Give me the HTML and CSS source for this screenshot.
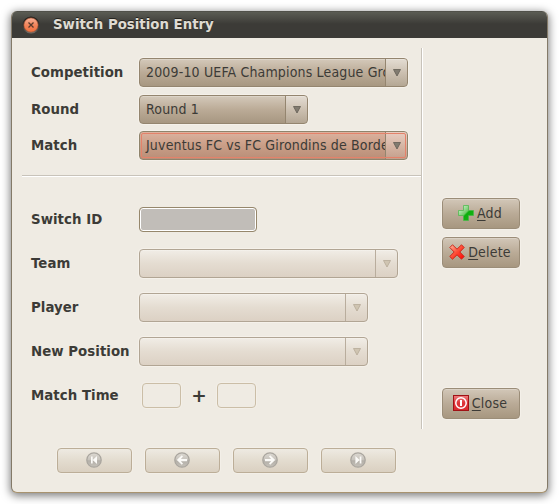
FILE: index.html
```
<!DOCTYPE html>
<html lang="en">
<head>
<meta charset="utf-8">
<title>Switch Position Entry</title>
<link rel="stylesheet" href="styles.css">
</head>
<body>
<main class="window">
  <header class="titlebar">
    <svg class="close" width="18" height="18" viewBox="0 0 18 18">
      <defs><linearGradient id="orb" x1="0" y1="0" x2="0" y2="1"><stop offset="0" stop-color="#f8b39a"/><stop offset=".5" stop-color="#f3855c"/><stop offset="1" stop-color="#f2703c"/></linearGradient>
      <linearGradient id="rim" x1="0" y1="0" x2="0" y2="1"><stop offset="0" stop-color="#1f1e1b"/><stop offset=".6" stop-color="#3a3733"/><stop offset="1" stop-color="#77736c"/></linearGradient></defs>
      <circle cx="9" cy="9" r="8.600" fill="url(#rim)"/>
      <circle cx="9" cy="9" r="7.100" fill="url(#orb)" stroke="#b85a35" stroke-width=".6"/>
      <path d="M6.500 6.500l5 5M11.500 6.500l-5 5" stroke="#5a3a2c" stroke-width="1.300"/>
    </svg>
    <h1>Switch Position Entry</h1>
  </header>
  <div class="body">
    <div class="upper">
      <div class="left">
        <section class="filters">
          <div class="row"><label>Competition</label><div class="combo w269"><span class="value">2009-10 UEFA Champions League Gro</span><span class="drop"><svg width="9" height="8"><path d="M.5 .5h7l-3.500 6.500z"/></svg></span></div></div>
          <div class="row"><label>Round</label><div class="combo w169"><span class="value">Round 1</span><span class="drop"><svg width="9" height="8"><path d="M.5 .5h7l-3.500 6.500z"/></svg></span></div></div>
          <div class="row match"><label>Match</label><div class="combo w269 focus"><span class="value">Juventus FC vs FC Girondins de Borde</span><span class="drop"><svg width="9" height="8"><path d="M.5 .5h7l-3.500 6.500z"/></svg></span></div></div>
        </section>
        <section class="details">
          <div class="row"><label>Switch ID</label><div class="entry id"></div></div>
          <div class="row"><label>Team</label><div class="combo w259 off"><span class="value"></span><span class="drop"><svg width="9" height="8"><path d="M.5 .5h7l-3.500 6.500z"/></svg></span></div></div>
          <div class="row"><label>Player</label><div class="combo w229 off"><span class="value"></span><span class="drop"><svg width="9" height="8"><path d="M.5 .5h7l-3.500 6.500z"/></svg></span></div></div>
          <div class="row"><label>New Position</label><div class="combo w229 off"><span class="value"></span><span class="drop"><svg width="9" height="8"><path d="M.5 .5h7l-3.500 6.500z"/></svg></span></div></div>
          <div class="row"><label>Match Time</label><div class="time"><div class="entry small"></div><span class="plus">+</span><div class="entry small"></div></div></div>
        </section>
      </div>
      <aside class="actions">
        <button class="btn add"><svg width="16" height="16" viewBox="0 0 16 16"><defs><linearGradient id="g" x1="0" y1="0" x2="1" y2="1"><stop offset=".15" stop-color="#c3ecc0"/><stop offset=".48" stop-color="#6ecb68"/><stop offset=".55" stop-color="#0cae0c"/><stop offset="1" stop-color="#19b519"/></linearGradient></defs><path d="M5.500.5h5v5h5v5h-5v5h-5v-5h-5v-5h5z" fill="url(#g)" stroke="#45b845" stroke-width=".7"/></svg><span><u>A</u>dd</span></button>
        <button class="btn delete"><svg width="16" height="16" viewBox="0 0 16 16"><defs><linearGradient id="r" x1="0" y1="0" x2="1" y2="1"><stop offset="0" stop-color="#ffb7a0"/><stop offset=".5" stop-color="#ff4b35"/><stop offset="1" stop-color="#f00"/></linearGradient></defs><path d="M3.500.8L8 5.200 12.500.8 15.200 3.500 10.800 8l4.400 4.500-2.700 2.700L8 10.800l-4.500 4.400L.8 12.500 5.200 8 .8 3.500z" fill="url(#r)" stroke="#c82a1c"/></svg><span><u>D</u>elete</span></button>
        <button class="btn quit"><svg width="16" height="16" viewBox="0 0 16 16"><defs><linearGradient id="q" x1="0" y1="0" x2="0" y2="1"><stop offset="0" stop-color="#ee7f7f"/><stop offset=".5" stop-color="#dd3438"/><stop offset="1" stop-color="#d92a2e"/></linearGradient></defs><rect x=".5" y=".5" width="15" height="15" fill="url(#q)" stroke="#a01216"/><circle cx="8" cy="8" r="5.200" fill="none" stroke="#fff" stroke-width="1.500"/><path d="M8 5v6" stroke="#fff" stroke-width="2"/></svg><span><u>C</u>lose</span></button>
      </aside>
    </div>
    <nav class="nav">
      <button><svg width="16" height="16" viewBox="0 0 16 16"><circle cx="8" cy="8" r="7.200"/><path d="M5 4.500h1.700v7H5zM11 4v8L6.700 8z"/></svg></button>
      <button><svg width="16" height="16" viewBox="0 0 16 16"><circle cx="8" cy="8" r="7.200"/><path d="M2.800 8l5-4.800 1.200 1.300L6.900 6.900H13v2.300H6.900L9 11.500l-1.200 1.300z"/></svg></button>
      <button><svg width="16" height="16" viewBox="0 0 16 16"><circle cx="8" cy="8" r="7.200"/><path d="M13.200 8l-5-4.800L7 4.500l2.100 2.400H3v2.300h6.100L7 11.500l1.200 1.300z"/></svg></button>
      <button><svg width="16" height="16" viewBox="0 0 16 16"><circle cx="8" cy="8" r="7.200"/><path d="M9.700 4.500h1.700v7H9.700zM5.400 4v8L9.700 8z"/></svg></button>
    </nav>
  </div>
</main>
<svg width="0" height="0" class="defs"><defs><linearGradient id="gray" x1="0" y1="0" x2="0" y2="1"><stop offset="0" stop-color="#ddd9d2"/><stop offset=".5" stop-color="#c6c2bb"/><stop offset=".55" stop-color="#b3afa8"/><stop offset="1" stop-color="#c6c2ba"/></linearGradient></defs></svg>
</body>
</html>
```
FILE: styles.css
```
* { box-sizing: border-box; }
body { margin: 0; height: 504px; padding: 11px 0 0 11px; background: #fff; overflow: hidden; font-family: "DejaVu Sans Condensed", "DejaVu Sans", sans-serif; font-stretch: condensed; color: #3c3b37; }
svg { display: block; flex: none; }
.defs { position: absolute; }
.window { width: 537px; height: 482px; border: 1px solid #847a68; border-top: 0; border-bottom-color: #a8936f; border-radius: 6px; background: #efebe3; box-shadow: 0 2px 8px 1px rgba(0,0,0,.5); overflow: hidden; }
.titlebar { display: flex; align-items: center; height: 27px; padding-left: 10px; background: linear-gradient(#46453f 0, #5b5c54 1px, #3c3b37 13px, #3c3b37); }
.close { margin-top: 1px; }
.titlebar h1 { margin: 0 0 0 13px; font: bold 13.33px/27px "DejaVu Sans", sans-serif; color: #dfdbd2; text-shadow: 0 -1px #25241f; }
.body { padding: 10px 0 0 10px; }
.upper { display: flex; height: 381px; }
.left { width: 400px; border-right: 1px solid #c8c3ba; box-shadow: 1px 0 #fff; }
.filters { height: 128px; padding: 10px 0 0 9px; display: flex; flex-direction: column; border-bottom: 1px solid #c8c3ba; box-shadow: 0 1px #fff; }
.details { padding: 31px 0 0 9px; }
.row { display: flex; align-items: center; height: 29px; }
.filters .row { margin-bottom: 8px; }
.filters .match { margin-top: -1px; }
.details .row { height: 25px; margin-bottom: 19px; }
label { width: 108px; flex: none; font: bold 13.33px/20px "DejaVu Sans", sans-serif; letter-spacing: .04px; white-space: nowrap; }
.combo { display: flex; flex: none; height: 29px; border: 1px solid #94856f; border-radius: 4px; background: linear-gradient(#d4c9ba, #bbab97 50%, #a79781); box-shadow: 0 0 0 1px #f5f1ea, inset 0 1px rgba(255,255,255,.22); overflow: hidden; }
.w269 { width: 269px; }
.w169 { width: 169px; }
.w259 { width: 259px; }
.w229 { width: 229px; }
.value { flex: 1; min-width: 0; padding-left: 6px; font-size: 14px; line-height: 27px; letter-spacing: .16px; white-space: nowrap; overflow: hidden; }
.drop { width: 22px; flex: none; padding: 10px 0 0 7px; border-left: 1px solid #94856f; background: linear-gradient(rgba(255,255,255,.35), rgba(255,255,255,.15)); }
.drop path { fill: #817b70; stroke: #625d54; stroke-width: .8; }
.focus { border-color: #8f846c; background: linear-gradient(#dcb29f, #c99e87 50%, #b98e78); box-shadow: 0 0 0 1px #f5f1ea; position: relative; }
.focus::after { content: ""; position: absolute; inset: 1px; border: 1px solid #e4826a; border-radius: 2px; }
.off { border-color: #b1a594; background: linear-gradient(#f1ede6, #e4dcd1 50%, #dcd1c4); }
.off .drop { border-color: #b9ad9d; background: none; }
.off .drop path { fill: #cfc4b1; stroke: #b5aa97; }
.entry { height: 25px; border: 1px solid #cbbea7; border-radius: 4px; box-shadow: 0 0 0 1px #f3efe8; }
.id { width: 118px; border-color: #96876c; background: #c1bdb8; box-shadow: inset 0 0 0 1px #fff; }
.time { display: flex; align-items: center; padding-left: 3px; }
.small { width: 39px; }
.plus { width: 36px; text-align: center; font: bold 18.5px/25px "DejaVu Sans", sans-serif; }
.actions { padding: 150px 0 0 20px; }
button { display: flex; align-items: center; justify-content: center; margin: 0; padding: 0; border-radius: 4px; font: 14px/20px "DejaVu Sans Condensed", "DejaVu Sans", sans-serif; font-stretch: condensed; color: #3c3b37; }
.btn { width: 78px; height: 31px; margin-bottom: 8px; padding: 0 2px 2px 0; gap: 3px; letter-spacing: .2px; border: 1px solid #9b8d78; background: linear-gradient(#d2c7b8, #baab97 50%, #a79780); box-shadow: 0 0 0 1px #f4f0e9, inset 0 1px rgba(255,255,255,.2); }
.quit { margin-top: 120px; }
u { text-decoration: underline; text-decoration-thickness: 1px; text-underline-offset: 2px; text-decoration-skip-ink: none; }
.nav { display: flex; gap: 13px; padding: 19px 0 0 35px; }
.nav button { width: 75px; height: 25px; padding: 0 2px 1px 0; border: 1px solid #bcae98; background: linear-gradient(#eeeae2, #e3dccf 50%, #dad0c1); box-shadow: 0 0 0 1px #f3efe8; }
.nav circle { fill: url(#gray); stroke: #aaa69f; stroke-width: 1.3; }
.nav path { fill: #fbfaf7; }
```
